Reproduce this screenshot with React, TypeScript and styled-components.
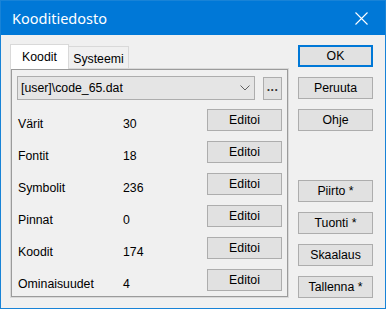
import { FC, Fragment } from 'react';
import styled, { createGlobalStyle } from 'styled-components';

const GlobalStyle = createGlobalStyle`
    html, body {
        margin: 0;
        padding: 0;
        background: #f0f0f0;
    }
    * {
        box-sizing: border-box;
    }
`

const Window = styled.div`
    width: 386px;
    height: 309px;
    border: 1px solid #1883d7;
    background: #f0f0f0;
    display: flex;
    flex-direction: column;
    font-family: "Liberation Sans", Arial, sans-serif;
    font-size: 12.3px;
    color: #000;
    overflow: hidden;
`
const TitleBar = styled.div`
    height: 34px;
    flex: none;
    background: #0078d7;
    display: flex;
    align-items: center;
    justify-content: space-between;
    padding: 0 17px 0 11px;
`
const Title = styled.span`
    font-family: "Noto Sans", "Open Sans", sans-serif;
    font-size: 14.5px;
    color: #fff;
    margin-top: -1px;
`
const Content = styled.div`
    flex: 1;
    display: flex;
    gap: 9px;
    padding: 9px 12px 10px 9px;
`
const TabControl = styled.div`
    width: 279px;
    display: flex;
    flex-direction: column;
`
const Tabs = styled.div`
    height: 24px;
    display: flex;
    align-items: flex-end;
`
const Tab = styled.div<{ $active?: boolean }>`
    height: ${p => (p.$active ? '25px' : '22px')};
    width: ${p => (p.$active ? '59px' : '60px')};
    margin-bottom: ${p => (p.$active ? '-1px' : '0')};
    background: ${p => (p.$active ? '#fff' : '#f0f0f0')};
    border: 1px solid #d9d9d9;
    border-bottom: none;
    border-left: ${p => (p.$active ? '1px solid #d9d9d9' : 'none')};
    display: flex;
    align-items: center;
    justify-content: center;
    padding-top: ${p => (p.$active ? '0' : '2px')};
    position: relative;
    z-index: ${p => (p.$active ? 1 : 0)};
`
const Panel = styled.div`
    flex: 1;
    border: 1px solid #d9d9d9;
    box-shadow: inset 0 0 0 1px #9b9b9b;
    background: #f0f0f0;
    padding: 7px 6px 6px 6px;
    display: flex;
    flex-direction: column;
    gap: 9px;
`
const FileRow = styled.div`
    display: flex;
    align-items: center;
    gap: 8px;
`
const Combo = styled.div`
    flex: 1;
    height: 24px;
    background: #e5e5e5;
    border: 1px solid #adadad;
    display: flex;
    align-items: center;
    justify-content: space-between;
    padding: 0 4px 1px 3px;
`
const DotsButton = styled.div`
    width: 19px;
    height: 23px;
    background: #e1e1e1;
    border: 1px solid #adadad;
    display: flex;
    align-items: center;
    justify-content: center;
    font-weight: bold;
    letter-spacing: 0.5px;
    padding-bottom: 2px;
    color: #333;
`
const Rows = styled.div`
    display: grid;
    grid-template-columns: 105px 1fr 75px;
    row-gap: 10px;
`
const Cell = styled.span`
    padding: 8px 0 0 1px;
    line-height: 14px;
`
const Button = styled.div<{ $default?: boolean }>`
    width: 75px;
    height: 22px;
    background: #e1e1e1;
    border: 1px solid ${p => (p.$default ? '#0078d7' : '#adadad')};
    box-shadow: ${p => (p.$default ? 'inset 0 0 0 1px #0078d7' : 'none')};
    display: flex;
    align-items: center;
    justify-content: center;
    padding-bottom: 1px;
`
const Side = styled.div`
    width: 75px;
    display: flex;
    flex-direction: column;
    justify-content: space-between;
    padding-top: 1px;
`
const ButtonGroup = styled.div`
    display: flex;
    flex-direction: column;
    gap: 10px;
`

const CloseIcon: FC = () => (
    <svg width="13" height="13" viewBox="0 0 13 13">
        <path d="M0.5 0.5 L12.5 12.5 M12.5 0.5 L0.5 12.5" stroke="#fff" strokeWidth="1.1" fill="none" />
    </svg>
)

const Chevron: FC = () => (
    <svg width="10" height="6" viewBox="0 0 10 6">
        <path d="M0.5 0.5 L5 5 L9.5 0.5" stroke="#606060" strokeWidth="1" fill="none" />
    </svg>
)

const items = [
    { name: 'Värit', count: 30 },
    { name: 'Fontit', count: 18 },
    { name: 'Symbolit', count: 236 },
    { name: 'Pinnat', count: 0 },
    { name: 'Koodit', count: 174 },
    { name: 'Ominaisuudet', count: 4 },
];

const App: FC = () => {
    return (
        <>
            <GlobalStyle />
            <Window>
                <TitleBar>
                    <Title>Kooditiedosto</Title>
                    <CloseIcon />
                </TitleBar>
                <Content>
                    <TabControl>
                        <Tabs>
                            <Tab $active>Koodit</Tab>
                            <Tab>Systeemi</Tab>
                        </Tabs>
                        <Panel>
                            <FileRow>
                                <Combo>
                                    <span>[user]\code_65.dat</span>
                                    <Chevron />
                                </Combo>
                                <DotsButton>...</DotsButton>
                            </FileRow>
                            <Rows>
                                {items.map(item => (
                                    <Fragment key={item.name}>
                                        <Cell>{item.name}</Cell>
                                        <Cell>{item.count}</Cell>
                                        <Button>Editoi</Button>
                                    </Fragment>
                                ))}
                            </Rows>
                        </Panel>
                    </TabControl>
                    <Side>
                        <ButtonGroup>
                            <Button $default>OK</Button>
                            <Button>Peruuta</Button>
                            <Button>Ohje</Button>
                        </ButtonGroup>
                        <ButtonGroup>
                            <Button>Piirto *</Button>
                            <Button>Tuonti *</Button>
                            <Button>Skaalaus</Button>
                            <Button>Tallenna *</Button>
                        </ButtonGroup>
                    </Side>
                </Content>
            </Window>
        </>
    )
}

export default App;
